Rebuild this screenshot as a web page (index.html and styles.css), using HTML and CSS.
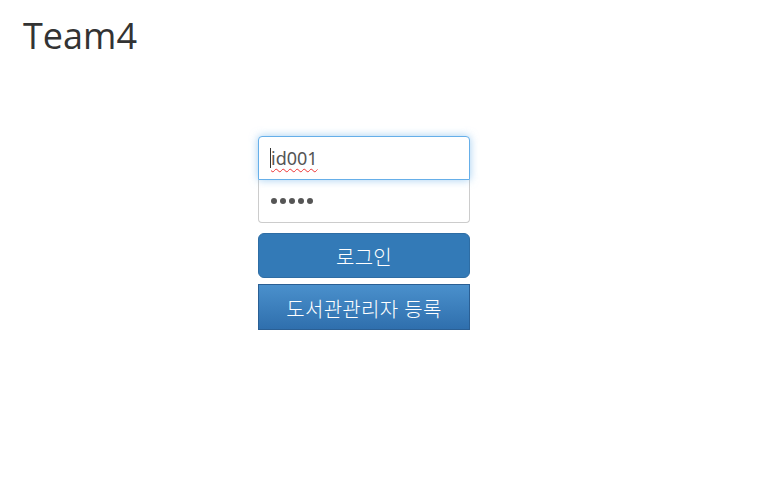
FILE: index.html
```html
<!DOCTYPE html>
<html lang="ko">
<head>
<meta charset="utf-8">
<title>Team4</title>
<link rel="stylesheet" href="styles.css">
</head>
<body>
<header class="header">
  <h1 class="brand">Team4</h1>
</header>
<main class="main">
  <form class="signin">
    <div class="field-group">
      <div class="input input-top input-focus"><span class="caret"></span><span class="typed">id001</span></div>
      <div class="input input-bottom"><span class="dots"><i></i><i></i><i></i><i></i><i></i></span></div>
    </div>
    <button type="button" class="btn btn-login">로그인</button>
    <button type="button" class="btn btn-register">도서관관리자 등록</button>
  </form>
</main>
</body>
</html>
```
FILE: styles.css
```css
* { box-sizing: border-box; }
html, body { margin: 0; padding: 0; background: #fff; }
body {
  font-family: "Noto Sans", "Noto Sans CJK KR", sans-serif;
  color: #333;
  width: 777px;
  height: 487px;
  overflow: hidden;
}
.header { padding: 12px 0 0 23px; height: 136px; }
.brand {
  margin: 0;
  font-family: "Open Sans", "Noto Sans", sans-serif;
  font-weight: 400;
  font-size: 36px;
  line-height: 48px;
  color: #333;
}
.main { padding-left: 258px; }
.signin { width: 212px; display: flex; flex-direction: column; }
.field-group { display: flex; flex-direction: column; margin-bottom: 10px; }
.input {
  height: 44px;
  border: 1px solid #ccc;
  background: #fff;
  display: flex;
  align-items: center;
  padding: 0 11px;
  font-size: 18px;
  color: #555;
  position: relative;
}
.input-top { border-radius: 4px 4px 0 0; height: 44px; }
.input-bottom { border-radius: 0 0 4px 4px; border-top: none; height: 43px; }
.input-focus {
  border-color: #66afe9;
  box-shadow: 0 0 8px rgba(102,175,233,0.6);
  z-index: 1;
}
.caret { width: 1px; height: 20px; background: #333; }
.typed {
  font-family: "Noto Sans", sans-serif;
  font-size: 18px;
  color: #555;
  text-decoration: underline wavy #e33;
  text-decoration-thickness: 1px;
  text-underline-offset: 3px;
}
.dots { display: flex; gap: 3px; padding-left: 1px; }
.dots i { display: block; width: 6px; height: 6px; border-radius: 50%; background: #555; }
.btn {
  font-family: "Noto Sans CJK KR", "Noto Sans", sans-serif;
  font-size: 20px;
  font-weight: 300;
  color: #fff;
  width: 212px;
  border: 1px solid #2e6da4;
  cursor: pointer;
  padding: 2px 0 0;
  letter-spacing: 0.3px;
}
.btn-login {
  height: 45px;
  background: #337ab7;
  border-radius: 6px;
  margin-bottom: 6px;
}
.btn-register {
  height: 46px;
  background: linear-gradient(to bottom, #4a90cc 0%, #2f6fad 100%);
  border-color: #2a5f94;
  border-radius: 0;
}
```
